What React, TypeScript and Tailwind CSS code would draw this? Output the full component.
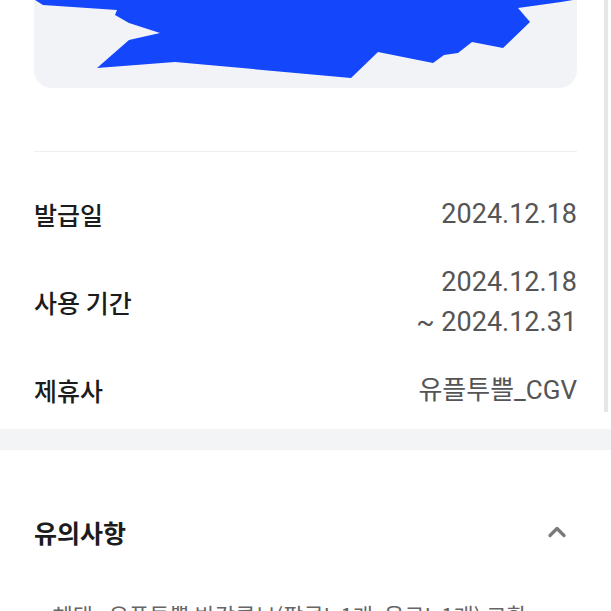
import { ChevronUp } from "lucide-react";

const labelFont = { fontFamily: "'Noto Sans CJK KR', sans-serif" };

function InfoRow({ label, values, size = "text-[27px]" }: { label: string; values: string[]; size?: string }) {
    return (
        <div className="flex items-center justify-between">
            <span className="text-[25px] leading-[40px] font-medium text-[#1c1c1c]">{label}</span>
            <div className="flex flex-col items-end">
                {values.map((v) => (
                    <span
                        key={v}
                        className={`${size} leading-[40px] text-[#555555] font-[Roboto,'Noto_Sans_CJK_KR',sans-serif]`}
                    >
                        {v}
                    </span>
                ))}
            </div>
        </div>
    );
}

export default function App() {
    return (
        <div
            className="relative w-[611px] h-[611px] overflow-hidden bg-white"
            style={labelFont}
        >
            {/* scrollbar track */}
            <div className="absolute right-[3px] top-0 w-[4px] h-[412px] bg-[#e6e6e6]" />

            <section className="px-[34px] pb-[19px]">
                <div className="relative h-[88px] rounded-b-[18px] bg-[#f2f3f6] overflow-hidden">
                    <svg className="absolute inset-0" width="543" height="88" viewBox="0 0 543 88">
                        <polygon
                            fill="#1446fb"
                            points="1,0 9,5 83,10 81,15 95,23 126,33 95,40 63,68 141,62 317,78 344,52 399,63 410,55 424,53 438,42 469,48 496,22 484,8 527,2 539,0"
                        />
                    </svg>
                </div>

                <div className="mt-[63px] h-px bg-[#efefef]" />

                <div className="flex flex-col gap-[28px] pt-[42px]">
                    <InfoRow label="발급일" values={["2024.12.18"]} />
                    <InfoRow label="사용 기간" values={["2024.12.18", "~ 2024.12.31"]} />
                    <InfoRow label="제휴사" values={["유플투쁠_CGV"]} size="text-[26px]" />
                </div>
            </section>

            <div className="h-[21px] bg-[#f2f4f5]" />

            <section className="px-[34px]">
                <div className="flex items-center justify-between pt-[62px] pb-[46px]">
                    <h2 className="text-[25px] leading-[40px] font-bold text-[#1c1c1c]">유의사항</h2>
                    <ChevronUp className="mr-[6px] text-[#7a7a7a]" size={28} strokeWidth={2.8} />
                </div>
                <p className="pl-[6px] text-[22px] leading-[32px] text-[#666666] whitespace-nowrap">
                    • 혜택 : 유플투쁠 반값콤보(팝콘L 1개, 음료L 1개) 교환
                </p>
            </section>
        </div>
    );
}
